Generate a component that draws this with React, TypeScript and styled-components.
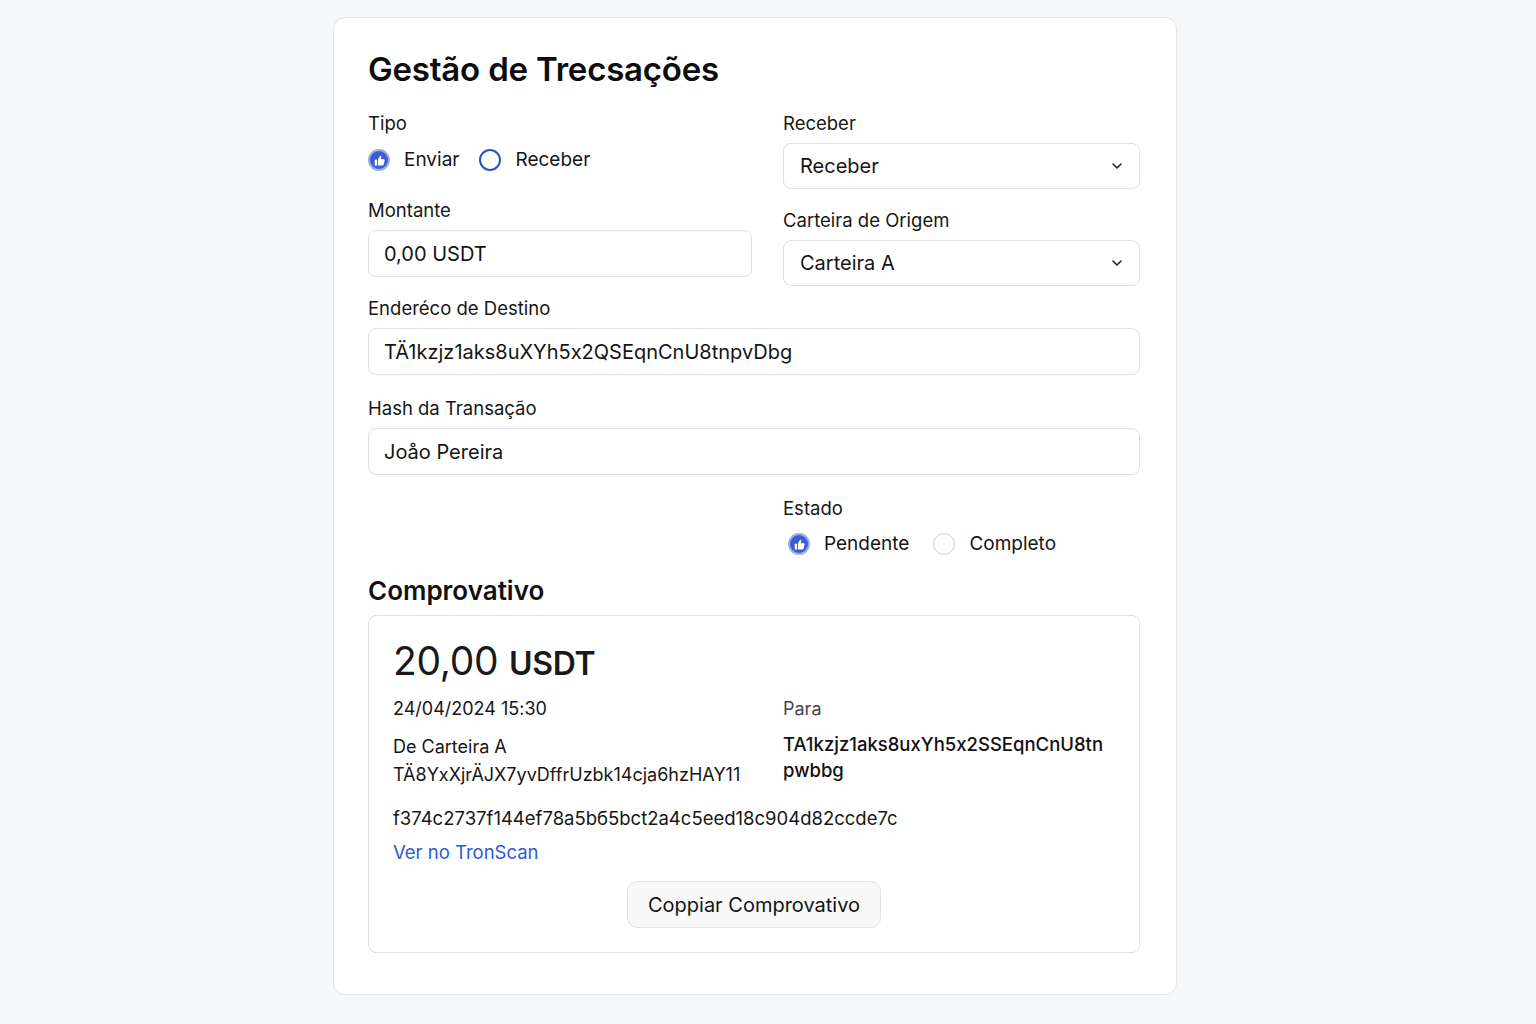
import styled, { createGlobalStyle } from 'styled-components';

const GlobalStyle = createGlobalStyle`
  html, body {
    margin: 0;
    padding: 0;
    background: #f6f7f9;
    font-family: Inter, "Noto Sans", "Liberation Sans", sans-serif;
    font-feature-settings: "calt" 0;
    color: #111;
  }
`;

const ThumbDot = () => (
  <svg width="13" height="13" viewBox="0 0 12 12">
    <path d="M1.6 5.4h2.2v5.2H1.6z M4.6 5.2 L6.5 1.6 C7.4 1.6 7.9 2.3 7.7 3.2 L7.3 4.8 H9.8 C10.5 4.8 10.9 5.4 10.7 6 L9.8 9.8 C9.6 10.3 9.2 10.6 8.7 10.6 H4.6 Z" fill="#fff" />
  </svg>
);

const Chevron = () => (
  <svg width="16" height="16" viewBox="0 0 24 24" fill="none" stroke="#222" strokeWidth="2.3" strokeLinecap="round" strokeLinejoin="round">
    <path d="m6 9 6 6 6-6" />
  </svg>
);

const Radio = ({ label, checked, tone }: { label: string; checked?: boolean; tone?: 'blue' | 'gray' }) => (
  <RadioItem>
    <RadioCircle $checked={checked} $tone={tone}>{checked && <ThumbDot />}</RadioCircle>
    <span>{label}</span>
  </RadioItem>
);

const App = () => {
  return (
    <>
      <GlobalStyle />
      <Page>
        <Card>
          <Title>Gestão de Trecsações</Title>
          <TopGrid>
            <Column $gap={26}>
              <Field $gap={13}>
                <Label>Tipo</Label>
                <RadioRow $gap={20}>
                  <Radio label="Enviar" checked />
                  <Radio label="Receber" tone="blue" />
                </RadioRow>
              </Field>
              <Field>
                <Label>Montante</Label>
                <Input>0,00 USDT</Input>
              </Field>
            </Column>
            <Column $gap={19}>
              <Field>
                <Label>Receber</Label>
                <Select>
                  <span>Receber</span>
                  <Chevron />
                </Select>
              </Field>
              <Field>
                <Label>Carteira de Origem</Label>
                <Select>
                  <span>Carteira A</span>
                  <Chevron />
                </Select>
              </Field>
            </Column>
          </TopGrid>
          <Field>
            <Label>Enderéco de Destino</Label>
            <Input>TÄ1kzjz1aks8uXYh5x2QSEqnCnU8tnpvDbg</Input>
          </Field>
          <Field>
            <Label>Hash da Transação</Label>
            <Input>Joåo Pereira</Input>
          </Field>
          <EstadoRow>
            <Field $gap={12}>
              <Label>Estado</Label>
              <RadioRow $gap={24} $indent={5}>
                <Radio label="Pendente" checked />
                <Radio label="Completo" tone="gray" />
              </RadioRow>
            </Field>
          </EstadoRow>
          <SectionTitle>Comprovativo</SectionTitle>
          <Receipt>
            <Amount>
              20,00 <Currency>USDT</Currency>
            </Amount>
            <ReceiptGrid>
              <ReceiptCol $gap={14}>
                <Line>24/04/2024 15:30</Line>
                <WalletBlock>
                  <Line>De Carteira A</Line>
                  <Line>TÄ8YxXjrÄJX7yvDffrUzbk14cja6hzHAY11</Line>
                </WalletBlock>
              </ReceiptCol>
              <ReceiptCol $gap={10}>
                <Muted>Para</Muted>
                <Address>TA1kzjz1aks8uxYh5x2SSEqnCnU8tn pwbbg</Address>
              </ReceiptCol>
            </ReceiptGrid>
            <Hash>f374c2737f144ef78a5bб5bct2a4c5eed18c904d82ccde7c</Hash>
            <Link href="#">Ver no TronScan</Link>
            <ButtonRow>
              <CopyButton>Coppiar Comprovativo</CopyButton>
            </ButtonRow>
          </Receipt>
        </Card>
      </Page>
    </>
  );
};

const Page = styled.div`
  display: flex;
  justify-content: center;
  padding: 17px 26px 30px 0;
`;

const Card = styled.div`
  width: 844px;
  box-sizing: border-box;
  background: #fff;
  border: 1px solid #e2e4e8;
  border-radius: 12px;
  padding: 30px 36px 41px 34px;
  display: flex;
  flex-direction: column;
  gap: 21px;
`;

const Title = styled.h1`
  margin: 0;
  font-size: 33px;
  font-weight: 600;
  line-height: 42px;
  letter-spacing: -0.2px;
  color: #0d0d0d;
`;

const TopGrid = styled.div`
  display: grid;
  grid-template-columns: 384px 1fr;
  gap: 31px;
  margin-bottom: -11px;
`;

const Column = styled.div<{ $gap: number }>`
  display: flex;
  flex-direction: column;
  gap: ${(p) => p.$gap}px;
`;

const Field = styled.div<{ $gap?: number }>`
  display: flex;
  flex-direction: column;
  gap: ${(p) => p.$gap ?? 8}px;
`;

const Label = styled.div`
  font-size: 18.5px;
  line-height: 24px;
  color: #161616;
`;

const RadioRow = styled.div<{ $gap: number; $indent?: number }>`
  display: flex;
  align-items: center;
  gap: ${(p) => p.$gap}px;
  padding-left: ${(p) => p.$indent ?? 0}px;
`;

const RadioItem = styled.label`
  display: flex;
  align-items: center;
  gap: 14px;
  font-size: 19px;
  line-height: 24px;
  color: #151515;
`;

const RadioCircle = styled.span<{ $checked?: boolean; $tone?: 'blue' | 'gray' }>`
  width: 22px;
  height: 22px;
  box-sizing: border-box;
  border-radius: 50%;
  display: flex;
  align-items: center;
  justify-content: center;
  background: ${(p) => (p.$checked ? '#3b5fcf' : '#fff')};
  border: ${(p) =>
    p.$checked ? '2px solid #9aaee6' : p.$tone === 'gray' ? '1.5px solid #cfd2d6' : '2px solid #2f4fd0'};
`;

const Input = styled.div`
  height: 47px;
  box-sizing: border-box;
  border: 1px solid #dcdfe3;
  border-radius: 8px;
  padding: 0 15px;
  display: flex;
  align-items: center;
  font-size: 20px;
  color: #141414;
  background: #fff;
`;

const Select = styled(Input)`
  height: 46px;
  justify-content: space-between;
  padding: 0 14px 0 16px;
`;

const EstadoRow = styled.div`
  display: grid;
  grid-template-columns: 384px 1fr;
  gap: 31px;
  & > * {
    grid-column: 2;
  }
`;

const SectionTitle = styled.h2`
  margin: -2px 0 -13px;
  font-size: 26px;
  font-weight: 600;
  line-height: 32px;
  color: #111;
`;

const Receipt = styled.div`
  border: 1px solid #dcdfe3;
  border-radius: 8px;
  padding: 22px 24px 24px 24px;
  display: flex;
  flex-direction: column;
`;

const Amount = styled.div`
  font-size: 39px;
  line-height: 46px;
  color: #1a1a1a;
  letter-spacing: -0.3px;
`;

const Currency = styled.span`
  font-size: 32px;
  font-weight: 600;
`;

const ReceiptGrid = styled.div`
  display: grid;
  grid-template-columns: 390px 1fr;
  margin-top: 10px;
`;

const ReceiptCol = styled.div<{ $gap: number }>`
  display: flex;
  flex-direction: column;
  gap: ${(p) => p.$gap}px;
`;

const WalletBlock = styled.div`
  display: flex;
  flex-direction: column;
  gap: 4px;
`;

const Line = styled.div`
  font-size: 18px;
  line-height: 24px;
  color: #161616;
`;

const Muted = styled(Line)`
  color: #444;
`;

const Address = styled.div`
  font-size: 18.5px;
  line-height: 26px;
  font-weight: 500;
  color: #111;
  max-width: 330px;
`;

const Hash = styled(Line)`
  margin-top: 19px;
  font-size: 18.5px;
`;

const Link = styled.a`
  margin-top: 10px;
  font-size: 18.5px;
  line-height: 24px;
  color: #2a5bd7;
  text-decoration: none;
`;

const ButtonRow = styled.div`
  display: flex;
  justify-content: center;
  margin-top: 17px;
`;

const CopyButton = styled.button`
  height: 47px;
  padding: 0 20px;
  font-family: inherit;
  font-feature-settings: "calt" 0;
  font-size: 20px;
  color: #141414;
  background: #f8f8f8;
  border: 1px solid #e1e3e6;
  border-radius: 10px;
`;

export default App;
